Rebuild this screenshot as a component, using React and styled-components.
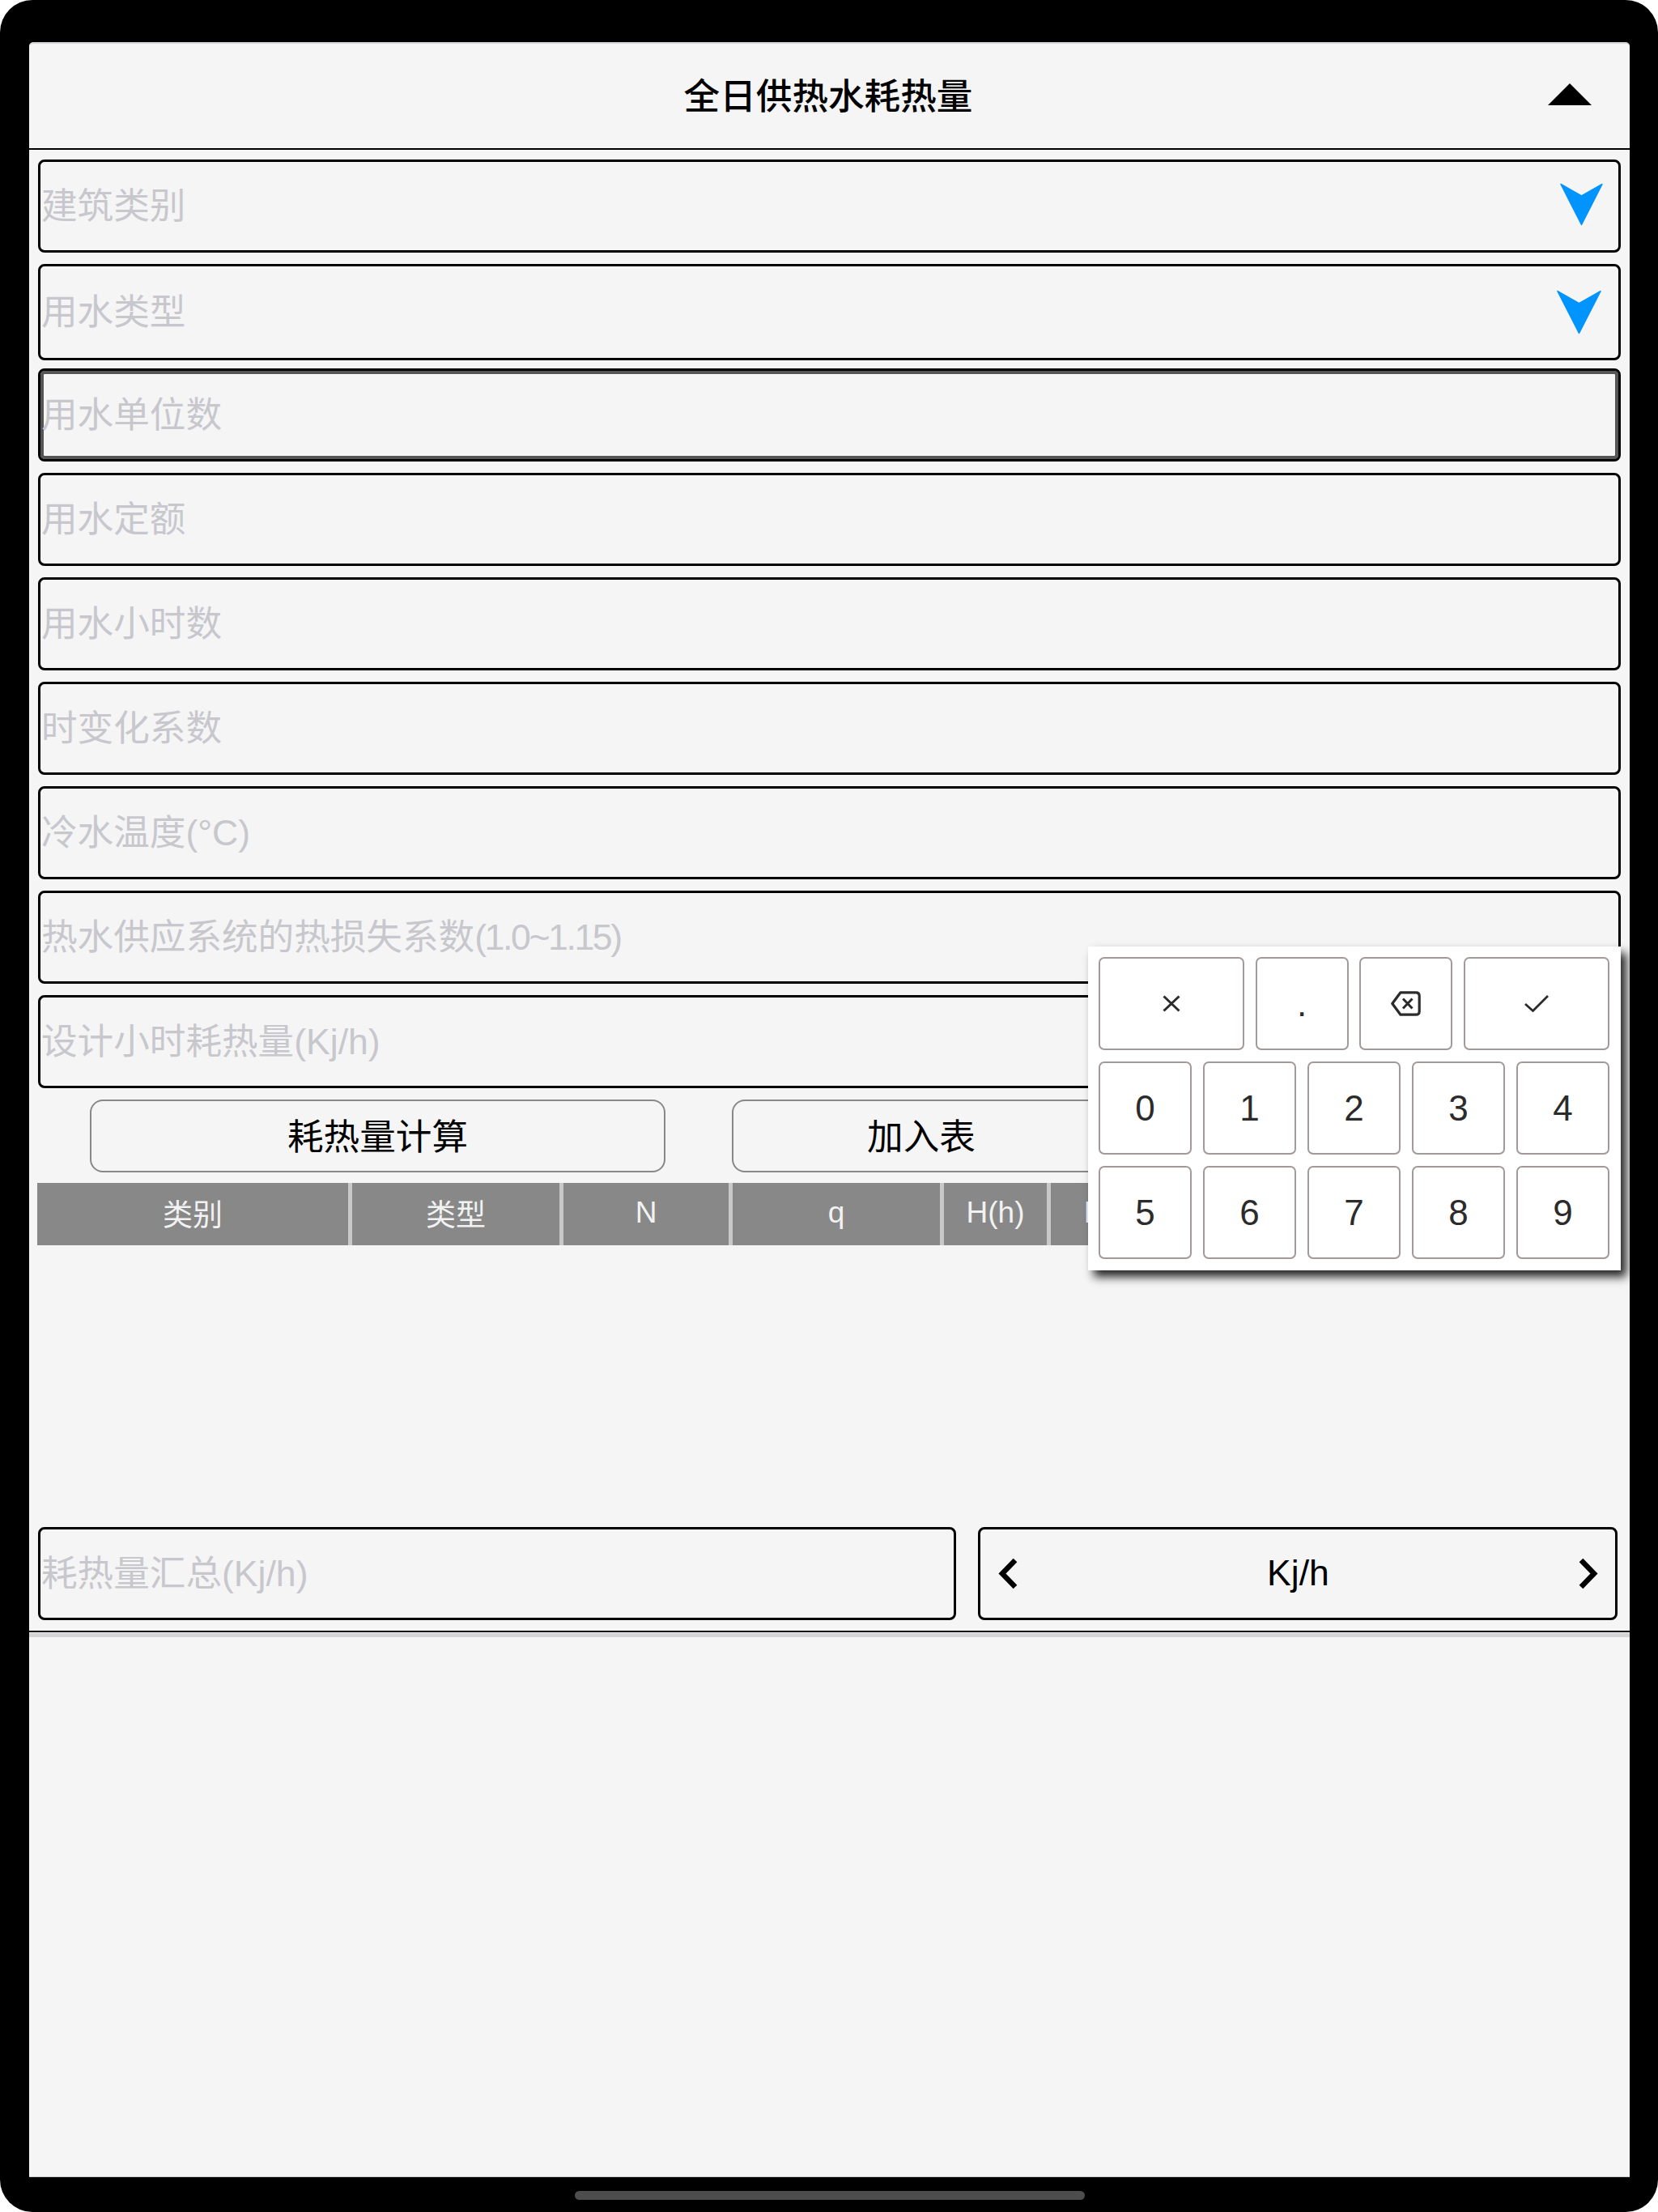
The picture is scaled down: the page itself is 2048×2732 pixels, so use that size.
import React from 'react';
import styled, { createGlobalStyle } from 'styled-components';

const GlobalStyle = createGlobalStyle`
  html, body {
    margin: 0;
    padding: 0;
    background: #fff;
    font-family: "Liberation Sans", "Noto Sans CJK SC", sans-serif;
  }
  * { box-sizing: border-box; }
`;

const buildingFields = [
  { label: '建筑类别', select: true, icon: 53, right: 19, drop: 4 },
  { label: '用水类型', select: true, icon: 55, right: 21, drop: 8, tall: true },
  { label: '用水单位数', focused: true },
  { label: '用水定额' },
  { label: '用水小时数' },
  { label: '时变化系数' },
  { label: '冷水温度(°C)' },
  { label: '热水供应系统的热损失系数', range: '(1.0~1.15)' },
  { label: '设计小时耗热量(Kj/h)' },
];

const columns = [
  { title: '类别', w: 389 },
  { title: '类型', w: 261 },
  { title: 'N', w: 209 },
  { title: 'q', w: 261 },
  { title: 'H(h)', w: 132 },
  { title: 'Kh', w: 132 },
  { title: 'tl', w: 132 },
];

function BlueArrow({ size }) {
  return (
    <ArrowSvg $size={size} viewBox="0 0 53 52">
      <path d="M1 1 L26.5 15.5 L52 1 L26.5 51 Z" fill="#0094ff" stroke="#0094ff" strokeWidth="1.5" strokeLinejoin="round" />
    </ArrowSvg>
  );
}

function Chevron({ right }) {
  return (
    <ChevronSvg viewBox="0 0 25 39">
      <path d={right ? 'M4 3 L20 19.5 L4 36' : 'M21 3 L5 19.5 L21 36'} fill="none" stroke="#000" strokeWidth="6.5" />
    </ChevronSvg>
  );
}

function Keypad() {
  return (
    <KeypadPanel>
      <TopKeys>
        <Key aria-label="close">
          <svg width="22" height="21" viewBox="0 0 22 21">
            <path d="M1.5 1.5 L20.5 19.5 M20.5 1.5 L1.5 19.5" fill="none" stroke="#2b2b2b" strokeWidth="3" />
          </svg>
        </Key>
        <Key>.</Key>
        <Key aria-label="backspace">
          <svg width="37" height="31" viewBox="0 0 37 31">
            <path
              d="M12 1.8 H31 Q35.2 1.8 35.2 6 V25 Q35.2 29.2 31 29.2 H12 L1.8 15.5 Z"
              fill="none"
              stroke="#2b2b2b"
              strokeWidth="3.2"
              strokeLinejoin="round"
            />
            <path d="M15 9.5 L26.5 21.5 M26.5 9.5 L15 21.5" fill="none" stroke="#2b2b2b" strokeWidth="3" />
          </svg>
        </Key>
        <Key aria-label="confirm">
          <svg width="30" height="21" viewBox="0 0 30 21">
            <path d="M1 11 L10.5 19.5 L29 1" fill="none" stroke="#2b2b2b" strokeWidth="2.8" />
          </svg>
        </Key>
      </TopKeys>
      <DigitKeys>
        {[0, 1, 2, 3, 4, 5, 6, 7, 8, 9].map((n) => (
          <Key key={n}>{n}</Key>
        ))}
      </DigitKeys>
    </KeypadPanel>
  );
}

export default function App() {
  return (
    <Frame>
      <GlobalStyle />
      <Screen>
        <Header>
          <Title>全日供热水耗热量</Title>
          <CollapseArrow viewBox="0 0 54 27">
            <path d="M27 0 L54 27 H0 Z" fill="#000" />
          </CollapseArrow>
        </Header>

        <FormArea>
          {buildingFields.map((f) => (
            <Field key={f.label} $tall={f.tall} $focused={f.focused}>
              <Placeholder>
                {f.label}
                {f.range && <RangeText>{f.range}</RangeText>}
              </Placeholder>
              {f.select && (
                <IconSlot $right={f.right} $drop={f.drop}>
                  <BlueArrow size={f.icon} />
                </IconSlot>
              )}
            </Field>
          ))}

          <ButtonRow>
            <ActionButton $w={711}>耗热量计算</ActionButton>
            <ActionButton $w={468}>加入表</ActionButton>
          </ButtonRow>

          <TableHead>
            {columns.map((c) => (
              <HeadCell key={c.title} $w={c.w}>{c.title}</HeadCell>
            ))}
            <HeadFiller />
          </TableHead>

          <TableBody />

          <SummaryRow>
            <SummaryField>
              <Placeholder>耗热量汇总(Kj/h)</Placeholder>
            </SummaryField>
            <UnitPicker>
              <Chevron />
              <UnitLabel>Kj/h</UnitLabel>
              <Chevron right />
            </UnitPicker>
          </SummaryRow>
        </FormArea>

        <SectionRule />
        <Keypad />
      </Screen>
      <HomeBar />
    </Frame>
  );
}

const Frame = styled.div`
  width: 2048px;
  height: 2732px;
  background: #000;
  border-radius: 40px;
  padding: 52px 35px 0 36px;
  display: flex;
  flex-direction: column;
  overflow: hidden;
`;

const Screen = styled.div`
  position: relative;
  height: 2637px;
  background: #f5f5f5;
  border-top: 2px solid #d4d4d8;
  border-bottom: 1px solid #ccc;
  border-radius: 5px 5px 0 0;
  display: flex;
  flex-direction: column;
`;

const Header = styled.div`
  height: 131px;
  flex-shrink: 0;
  border-bottom: 2px solid #000;
  display: flex;
  align-items: center;
  justify-content: center;
  position: relative;
`;

const Title = styled.div`
  font-size: 44.6px;
  font-weight: 500;
  color: #000;
  margin-top: -6px;
  margin-right: 3px;
`;

const CollapseArrow = styled.svg`
  position: absolute;
  right: 47px;
  top: 49px;
  width: 54px;
  height: 27px;
`;

const FormArea = styled.div`
  padding: 12px 11px 0;
  display: flex;
  flex-direction: column;
`;

const Field = styled.div`
  height: ${(p) => (p.$tall ? 119 : 115)}px;
  margin-bottom: ${(p) => (p.$tall ? 10 : 14)}px;
  border: 3px solid #000;
  border-radius: 8px;
  padding: 0 0 8px 1px;
  display: flex;
  align-items: center;
  justify-content: space-between;
  ${(p) => p.$focused && 'box-shadow: inset 0 0 0 4px #555;'}
`;

const Placeholder = styled.span`
  font-size: 44.6px;
  color: #c7c7cd;
  white-space: nowrap;
`;

const RangeText = styled.span`
  letter-spacing: -2.4px;
`;

const IconSlot = styled.div`
  display: flex;
  margin-right: ${(p) => p.$right}px;
  margin-top: ${(p) => p.$drop}px;
`;

const ArrowSvg = styled.svg`
  width: ${(p) => p.$size}px;
  height: ${(p) => p.$size}px;
`;

const ButtonRow = styled.div`
  display: flex;
  gap: 82px;
  padding-left: 64px;
  margin-bottom: 13px;
`;

const ActionButton = styled.div`
  width: ${(p) => p.$w}px;
  height: 90px;
  flex-shrink: 0;
  background: #f5f5f5;
  border: 2px solid #888;
  border-radius: 16px;
  padding-bottom: 5px;
  display: flex;
  align-items: center;
  justify-content: center;
  font-size: 44.6px;
  color: #000;
`;

const TableHead = styled.div`
  display: flex;
  height: 77px;
  margin-left: -1px;
  background: #888;
`;

const HeadCell = styled.div`
  width: ${(p) => p.$w}px;
  flex-shrink: 0;
  border-right: 5px solid #c8c8c8;
  padding-bottom: 3px;
  display: flex;
  align-items: center;
  justify-content: center;
  font-size: 37px;
  color: #f2f2f2;
`;

const HeadFiller = styled.div`
  flex: 1;
`;

const TableBody = styled.div`
  height: 348px;
`;

const SummaryRow = styled.div`
  display: flex;
  gap: 27px;
  height: 115px;
  margin-bottom: 2px;
`;

const SummaryField = styled.div`
  width: 1134px;
  border: 3px solid #000;
  border-radius: 8px;
  padding: 0 0 8px 1px;
  display: flex;
  align-items: center;
`;

const UnitPicker = styled.div`
  width: 790px;
  border: 3px solid #000;
  border-radius: 8px;
  padding: 0 21px 1px 22px;
  display: flex;
  align-items: center;
  justify-content: space-between;
`;

const UnitLabel = styled.span`
  font-size: 44.6px;
  color: #000;
`;

const ChevronSvg = styled.svg`
  width: 25px;
  height: 39px;
`;

const SectionRule = styled.div`
  height: 8px;
  margin-top: 11px;
  border-top: 2px solid #000;
  border-bottom: 5px solid #d4d4d8;
`;

const KeypadPanel = styled.div`
  position: absolute;
  left: 1308px;
  top: 1115px;
  width: 658px;
  height: 400px;
  background: #fff;
  padding: 13px 14px 14px 13px;
  box-shadow: 7px 8px 11px rgba(0, 0, 0, 0.85);
  display: flex;
  flex-direction: column;
  gap: 14px;
`;

const TopKeys = styled.div`
  display: grid;
  grid-template-columns: 180px 115px 115px 180px;
  justify-content: space-between;
  height: 115px;
`;

const DigitKeys = styled.div`
  display: grid;
  grid-template-columns: repeat(5, 115px);
  grid-auto-rows: 115px;
  justify-content: space-between;
  row-gap: 14px;
`;

const Key = styled.div`
  background: #fff;
  border: 2px solid #a39999;
  border-radius: 7px;
  display: flex;
  align-items: center;
  justify-content: center;
  font-size: 44px;
  color: #2b2b2b;
`;

const HomeBar = styled.div`
  width: 630px;
  height: 11px;
  flex-shrink: 0;
  margin: 17px auto 0;
  background: #4d4d4d;
  border-radius: 6px;
`;
